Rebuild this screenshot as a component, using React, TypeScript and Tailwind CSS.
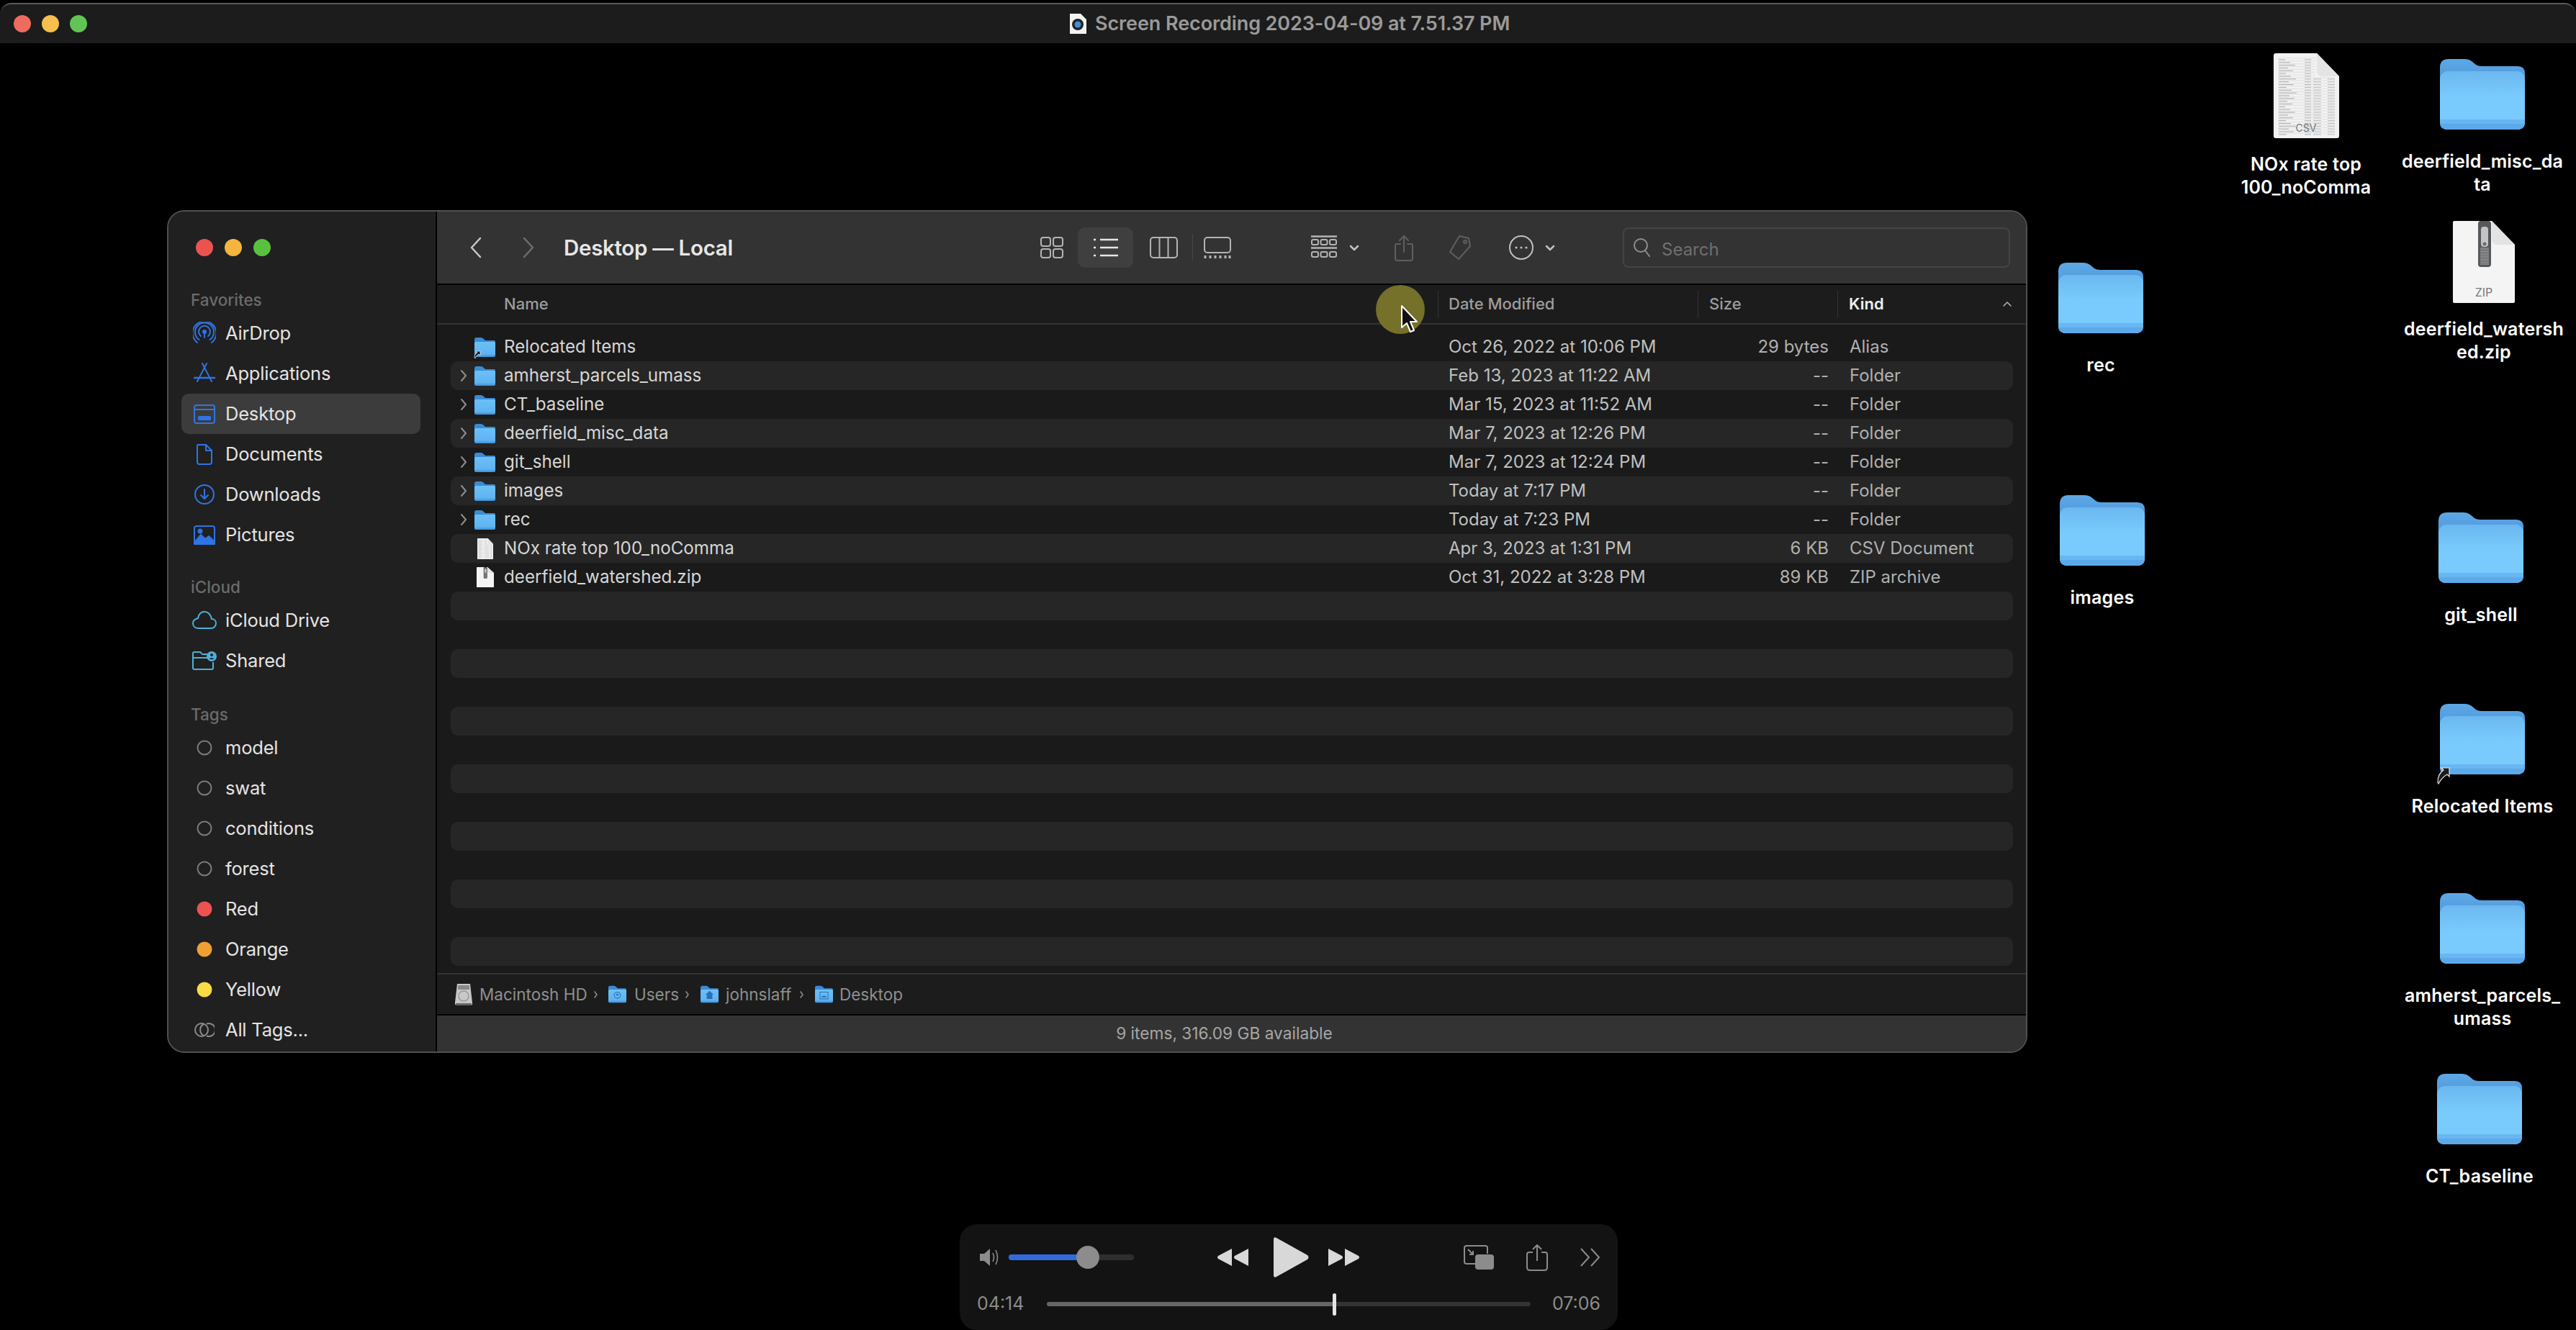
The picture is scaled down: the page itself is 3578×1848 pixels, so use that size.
import React from "react";

const FONT = "font-['Inter','Liberation_Sans',sans-serif]";

function BigFolder({ shortcut }: { shortcut?: boolean }) {
  return (
    <svg width="118" height="98" viewBox="0 0 118 98" className="overflow-visible block">
      <defs>
        <linearGradient id="bf" x1="0" y1="0" x2="0" y2="1">
          <stop offset="0" stopColor="#6bb8f0" />
          <stop offset="0.45" stopColor="#79cbfd" />
          <stop offset="1" stopColor="#79cbfd" />
        </linearGradient>
        <linearGradient id="bt" x1="0" y1="0" x2="0" y2="1">
          <stop offset="0" stopColor="#5ea8e6" />
          <stop offset="1" stopColor="#4a94d8" />
        </linearGradient>
      </defs>
      <path d="M0 12 Q0 0 12 0 H34 Q40 0 44 3 L50 8 Q53 10 58 10 H108 Q118 10 118 20 V40 H0 Z" fill="url(#bt)" />
      <rect x="0" y="17" width="118" height="81" rx="11" fill="url(#bf)" />
      <path d="M0 84 H118 V87 Q118 98 107 98 H11 Q0 98 0 87 Z" fill="#69b6f2" />
      <path d="M0 90 H118 Q117 98 107 98 H11 Q1 98 0 90 Z" fill="#5ca9ea" />
      {shortcut && (
        <g transform="translate(-3 89)">
          <path d="M0 20 C0 10 5 5 8 3 L5 0 H16 V12 L13 9 C8 12 4 16 1 22 Z" fill="#1c1c1c" stroke="#e8e8e8" strokeWidth="1.2" />
        </g>
      )}
    </svg>
  );
}

function SmallFolder({ shortcut, glyph, w = 29, h = 27 }: { shortcut?: boolean; glyph?: React.ReactNode; w?: number; h?: number }) {
  return (
    <svg width={w} height={h} viewBox="0 0 29 27" className="overflow-visible block shrink-0">
      <defs>
        <linearGradient id="sf" x1="0" y1="0" x2="0" y2="1">
          <stop offset="0" stopColor="#6cc0f8" />
          <stop offset="0.8" stopColor="#5fb4f1" />
          <stop offset="1" stopColor="#3f8ed6" />
        </linearGradient>
      </defs>
      <path d="M0 3 Q0 0 3 0 H9 Q11 0 13 2 L15 4 H27 Q29 4 29 6 V10 H0 Z" fill="#3a8bd6" />
      <rect x="0" y="6" width="29" height="21" rx="2" fill="url(#sf)" />
      {glyph}
      {shortcut && (
        <g transform="translate(0 19)">
          <path d="M0 9 C0 5 2 3 4 2 L2 0 H8 V6 L6 4 C4 5 2 7 1 10 Z" fill="#111" stroke="#f0f0f0" strokeWidth="0.8" />
        </g>
      )}
    </svg>
  );
}

function CsvIcon({ w, h, label = true }: { w: number; h: number; label?: boolean }) {
  const rows = Array.from({ length: 28 }, (_, i) => 7 + i * 3.85);
  return (
    <svg width={w} height={h} viewBox="0 0 91 118" preserveAspectRatio="none" className="block">
      <path d="M3 0 H60 L91 32 V115 Q91 118 88 118 H3 Q0 118 0 115 V3 Q0 0 3 0 Z" fill="#f2f2f2" />
      {rows.map((y, i) => (
        <g key={y}>
          <line x1="6" x2={y < 32 ? 58 : 85} y1={y} y2={y} stroke="#d4d4d4" strokeWidth="0.6" />
          <line x1="7" x2={16 + ((i * 7) % 17)} y1={y + 1.9} y2={y + 1.9} stroke="#a2a2a2" strokeWidth="0.9" />
          <line x1="43" x2="52" y1={y + 1.9} y2={y + 1.9} stroke="#aaaaaa" strokeWidth="0.9" />
          {y > 32 && <line x1="55" x2="66" y1={y + 1.9} y2={y + 1.9} stroke="#b2b2b2" strokeWidth="0.9" />}
          {y > 32 && <line x1="75" x2="85" y1={y + 1.9} y2={y + 1.9} stroke="#b2b2b2" strokeWidth="0.9" />}
        </g>
      ))}
      <path d="M60 0 L91 32 H68 Q60 32 60 24 Z" fill="#e4e4e4" />
      {label && (
        <text x="45" y="109" fontSize="14" fill="#777" textAnchor="middle" fontFamily="Inter, sans-serif">CSV</text>
      )}
    </svg>
  );
}

function ZipIcon({ w, h, label = true }: { w: number; h: number; label?: boolean }) {
  return (
    <svg width={w} height={h} viewBox="0 0 86 114" preserveAspectRatio="none" className="block">
      <path d="M2 0 H54 L86 33 V112 Q86 114 84 114 H2 Q0 114 0 112 V2 Q0 0 2 0 Z" fill="#f4f4f4" />
      <path d="M54 0 L86 33 H62 Q54 33 54 25 Z" fill="#e3e3e3" />
      <rect x="35" y="0" width="18" height="64" rx="4" fill="#55585c" />
      <rect x="39" y="8" width="10" height="28" rx="4" fill="#c4c4c4" />
      <circle cx="44" cy="32" r="2.5" fill="#6c6c6c" />
      {Array.from({ length: 11 }, (_, i) => (
        <line key={i} x1="38" x2="50" y1={38 + i * 2.2} y2={38 + i * 2.2} stroke="#b8b8b8" strokeWidth="0.9" />
      ))}
      {label && (
        <text x="43" y="105" fontSize="16" fill="#777" textAnchor="middle" fontFamily="Inter, sans-serif">ZIP</text>
      )}
    </svg>
  );
}

function DesktopLabel({ children }: { children: React.ReactNode }) {
  return (
    <div className="text-center text-[25px] leading-[32px] font-semibold text-white whitespace-nowrap tracking-[0.2px]">
      {children}
    </div>
  );
}

const Sb = ({ children, w = 32, h = 32 }: { children: React.ReactNode; w?: number; h?: number }) => (
  <svg width={w} height={h} viewBox="0 0 32 32" fill="none" stroke="#2f74e4" strokeWidth="2" strokeLinecap="round" strokeLinejoin="round" className="block">
    {children}
  </svg>
);

const sideFav: [string, React.ReactNode][] = [
  ["AirDrop", <Sb><circle cx="16" cy="14" r="2" fill="#2f74e4" /><path d="M11 20 A8 8 0 1 1 21 20" /><path d="M8.5 25 A13 13 0 1 1 23.5 25" /><path d="M6 29 A16.5 16.5 0 1 1 26 29" /><path d="M16 16 V22" /></Sb>],
  ["Applications", <Sb><path d="M13 2 L26 27" /><path d="M19 2 L6 27" /><path d="M2 22 H30" strokeWidth="2.5" /></Sb>],
  ["Desktop", <Sb><rect x="2" y="4" width="28" height="25" rx="3" /><path d="M2 10 H30" /><rect x="8" y="20" width="16" height="4" rx="0.5" fill="#2f74e4" /></Sb>],
  ["Documents", <Sb><path d="M7 3 H18 L26 11 V27 Q26 30 23 30 H9 Q6 30 6 27 V5 Q6 3 7 3 Z" /><path d="M18 3 V11 H26" /></Sb>],
  ["Downloads", <Sb><circle cx="16" cy="16" r="13" /><path d="M16 9 V22" /><path d="M11 17 L16 22 L21 17" /></Sb>],
  ["Pictures", <Sb><rect x="2" y="4" width="28" height="25" rx="3" /><path d="M2 27 L11 16 L17 22 L22 18 L30 26 V29 H2 Z" fill="#2f74e4" /><circle cx="10" cy="11" r="2.5" fill="#2f74e4" /></Sb>],
];

const Cloud = (
  <svg width="34" height="28" viewBox="0 0 34 28" fill="none" stroke="#4cb1d8" strokeWidth="2" className="block">
    <path d="M9 25 H26 C30 25 33 22 33 18 C33 14 30 12 27 12 C26 6 22 2 17 2 C12 2 9 6 8 11 C4 12 1 14 1 18 C1 22 4 25 9 25 Z" />
  </svg>
);
const Shared = (
  <svg width="34" height="28" viewBox="0 0 34 28" fill="none" stroke="#4cb1d8" strokeWidth="2" className="block">
    <path d="M22 5 H14 L11 2 H3 Q1 2 1 4 V24 Q1 26 3 26 H27 Q29 26 29 24 V16" />
    <path d="M1 10 H22" />
    <circle cx="27" cy="8" r="7" fill="#4cb1d8" stroke="none" />
    <circle cx="27" cy="6" r="2" fill="#202020" stroke="none" />
    <path d="M23.5 12 Q27 8 30.5 12" fill="#202020" stroke="none" />
  </svg>
);

const Ring = ({ color, fill }: { color: string; fill?: boolean }) => (
  <svg width="24" height="24" viewBox="0 0 24 24" className="block">
    <circle cx="12" cy="12" r={fill ? 10.5 : 9.5} fill={fill ? color : "none"} stroke={fill ? "none" : color} strokeWidth="2" />
  </svg>
);
const AllTags = (
  <svg width="28" height="24" viewBox="0 0 28 24" fill="none" stroke="#8a8a8a" strokeWidth="2" className="block">
    <circle cx="10" cy="12" r="9" />
    <path d="M17 3.5 A9 9 0 1 1 17 20.5" />
    <path d="M13 4 A9 9 0 0 0 13 20" />
  </svg>
);

function SideRow({ icon, label, selected }: { icon: React.ReactNode; label: string; selected?: boolean }) {
  return (
    <div className={`mx-[18px] w-[332px] h-[56px] rounded-[10px] flex items-center pl-[14px] ${selected ? "bg-[#3c3c3c]" : ""}`}>
      <div className="w-[36px] flex justify-center">{icon}</div>
      <span className="ml-[11px] text-[25.5px] text-[#e4e4e4] tracking-[-0.2px]">{label}</span>
    </div>
  );
}

function SideHead({ children, className }: { children: string; className: string }) {
  return (
    <div className={`h-[36px] pl-[31px] flex items-center text-[22.5px] font-medium text-[#6b6b6b] ${className}`}>{children}</div>
  );
}

const Chev = ({ dir, color, w, h, sw = 2.5 }: { dir: "l" | "r" | "d" | "u"; color: string; w: number; h: number; sw?: number }) => {
  const d = { l: `M${w - 2} 2 L2 ${h / 2} L${w - 2} ${h - 2}`, r: `M2 2 L${w - 2} ${h / 2} L2 ${h - 2}`, d: `M2 2 L${w / 2} ${h - 2} L${w - 2} 2`, u: `M2 ${h - 2} L${w / 2} 2 L${w - 2} ${h - 2}` }[dir];
  return (
    <svg width={w} height={h} viewBox={`0 0 ${w} ${h}`} fill="none" stroke={color} strokeWidth={sw} strokeLinecap="round" strokeLinejoin="round" className="block shrink-0">
      <path d={d} />
    </svg>
  );
};

const TB = "#b4b4b4";

function Toolbar() {
  return (
    <div className="h-[102px] shrink-0 bg-[#333333] border-b-2 border-black flex items-center">
      <div className="ml-[46px]"><Chev dir="l" color="#c9c9c9" w={16} h={30} /></div>
      <div className="ml-[57px]"><Chev dir="r" color="#6e6e6e" w={16} h={30} /></div>
      <div className="ml-[41px] w-[662px] text-[29.5px] font-semibold text-[#e6e6e6] tracking-[-0.3px] whitespace-nowrap">Desktop — Local</div>
      <svg width="32" height="30" viewBox="0 0 32 30" fill="none" stroke={TB} strokeWidth="2" className="block">
        <rect x="1" y="1" width="13" height="12" rx="3" /><rect x="18" y="1" width="13" height="12" rx="3" />
        <rect x="1" y="17" width="13" height="12" rx="3" /><rect x="18" y="17" width="13" height="12" rx="3" />
      </svg>
      <div className="ml-[20px] w-[77px] h-[56px] rounded-[10px] bg-[#3f3f3f] flex items-center justify-center">
        <svg width="34" height="28" viewBox="0 0 34 28" fill="none" stroke="#e6e6e6" strokeWidth="2.5" className="block">
          <path d="M9 3 H34 M9 14 H34 M9 25 H34" />
          <path d="M0 3 H3 M0 14 H3 M0 25 H3" />
        </svg>
      </div>
      <svg width="39" height="30" viewBox="0 0 39 30" fill="none" stroke={TB} strokeWidth="2" className="block ml-[23px]">
        <rect x="1" y="1" width="37" height="28" rx="4" /><path d="M13.5 1 V29 M25.5 1 V29" />
      </svg>
      <div className="ml-[20px] w-px h-[36px] bg-[#474747]" />
      <svg width="38" height="30" viewBox="0 0 38 30" fill="none" stroke={TB} strokeWidth="2" className="block ml-[15px]">
        <rect x="1" y="1" width="36" height="21" rx="4" />
        <path d="M2 26 V30 M9 26 V30 M16 26 V30 M23 26 V30 M30 26 V30 M36 26 V30" strokeWidth="3" />
      </svg>
      <svg width="36" height="35" viewBox="0 0 36 35" fill="none" stroke={TB} strokeWidth="2" className="block ml-[111px]">
        <path d="M0 1.5 H36 M0 17.5 H36" strokeWidth="2.5" />
        <rect x="1" y="6" width="9" height="7" rx="2" /><rect x="13.5" y="6" width="9" height="7" rx="2" /><rect x="26" y="6" width="9" height="7" rx="2" />
        <rect x="1" y="23" width="9" height="7" rx="2" /><rect x="13.5" y="23" width="9" height="7" rx="2" /><rect x="26" y="23" width="9" height="7" rx="2" />
      </svg>
      <div className="ml-[17px]"><Chev dir="d" color="#c0c0c0" w={14} h={9} /></div>
      <svg width="26" height="37" viewBox="0 0 26 37" fill="none" stroke="#5f5f5f" strokeWidth="2" strokeLinecap="round" strokeLinejoin="round" className="block ml-[49px]">
        <path d="M8 13 H3 Q1 13 1 15 V33 Q1 36 4 36 H22 Q25 36 25 33 V15 Q25 13 23 13 H18" />
        <path d="M13 24 V2 M7 8 L13 2 L19 8" />
      </svg>
      <svg width="30" height="36" viewBox="0 0 30 36" fill="none" stroke="#5f5f5f" strokeWidth="2" strokeLinejoin="round" className="block ml-[50px]">
        <path d="M14 2 L27 5 L29 16 L13 34 L1 24 Z" />
        <circle cx="22" cy="10" r="2" />
      </svg>
      <svg width="34" height="34" viewBox="0 0 34 34" fill="none" stroke="#c0c0c0" strokeWidth="2" className="block ml-[53px]">
        <circle cx="17" cy="17" r="16" />
        <circle cx="10" cy="17" r="1.6" fill="#c0c0c0" stroke="none" /><circle cx="17" cy="17" r="1.6" fill="#c0c0c0" stroke="none" /><circle cx="24" cy="17" r="1.6" fill="#c0c0c0" stroke="none" />
      </svg>
      <div className="ml-[16px]"><Chev dir="d" color="#c0c0c0" w={14} h={9} /></div>
      <div className="ml-[94px] w-[538px] h-[56px] rounded-[8px] border-2 border-[#444444] flex items-center pl-[12px]">
        <svg width="24" height="28" viewBox="0 0 24 28" fill="none" stroke="#8f8f8f" strokeWidth="2" className="block">
          <circle cx="11" cy="11" r="9" /><path d="M17 18 L23 26" strokeLinecap="round" />
        </svg>
        <span className="ml-[16px] mt-[5px] text-[24px] text-[#6f6f6f]">Search</span>
      </div>
    </div>
  );
}

function Header() {
  const sep = "w-px h-[38px] bg-[#343434] shrink-0";
  return (
    <div className="h-[55px] shrink-0 bg-[#1c1c1c] border-b-2 border-[#323232] flex items-center text-[22px] text-[#9d9d9d] font-medium">
      <div className="pl-[93px] w-[1390px] shrink-0">Name</div>
      <div className={sep} />
      <div className="ml-[14px] w-[346px] shrink-0">Date Modified</div>
      <div className={sep} />
      <div className="ml-[15px] w-[178px] shrink-0">Size</div>
      <div className={sep} />
      <div className="ml-[15px] w-[213px] shrink-0 text-[#f0f0f0] font-semibold">Kind</div>
      <Chev dir="u" color="#b0b0b0" w={14} h={9} sw={1.6} />
    </div>
  );
}

type Row = { name: string; date: string; size: string; kind: string; folder?: boolean; type?: "alias" | "csv" | "zip" };
const rows: Row[] = [
  { name: "Relocated Items", date: "Oct 26, 2022 at 10:06 PM", size: "29 bytes", kind: "Alias", type: "alias" },
  { name: "amherst_parcels_umass", date: "Feb 13, 2023 at 11:22 AM", size: "--", kind: "Folder", folder: true },
  { name: "CT_baseline", date: "Mar 15, 2023 at 11:52 AM", size: "--", kind: "Folder", folder: true },
  { name: "deerfield_misc_data", date: "Mar 7, 2023 at 12:26 PM", size: "--", kind: "Folder", folder: true },
  { name: "git_shell", date: "Mar 7, 2023 at 12:24 PM", size: "--", kind: "Folder", folder: true },
  { name: "images", date: "Today at 7:17 PM", size: "--", kind: "Folder", folder: true },
  { name: "rec", date: "Today at 7:23 PM", size: "--", kind: "Folder", folder: true },
  { name: "NOx rate top 100_noComma", date: "Apr 3, 2023 at 1:31 PM", size: "6 KB", kind: "CSV Document", type: "csv" },
  { name: "deerfield_watershed.zip", date: "Oct 31, 2022 at 3:28 PM", size: "89 KB", kind: "ZIP archive", type: "zip" },
];

function FileRow({ row, striped }: { row: Row; striped: boolean }) {
  return (
    <div className={`h-[40px] w-[2170px] ml-[19px] rounded-[10px] flex items-center text-[24.2px] text-[#d6d6d6] whitespace-nowrap ${striped ? "bg-[#262626]" : ""}`}>
      <div className="w-[33px] pl-[13px] shrink-0">
        {row.folder && <Chev dir="r" color="#8e8e8e" w={10} h={18} sw={2} />}
      </div>
      <div className="w-[41px] shrink-0 flex">
        {(row.folder || row.type === "alias") && <SmallFolder shortcut={row.type === "alias"} />}
        {row.type === "csv" && <div className="ml-[4px]"><CsvIcon w={22} h={29} label={false} /></div>}
        {row.type === "zip" && <div className="ml-[3px]"><ZipIcon w={24} h={28} label={false} /></div>}
      </div>
      <div className="w-[1312px] shrink-0">{row.name}</div>
      <div className="w-[359px] shrink-0 text-[#c0c0c0] text-[24px]">{row.date}</div>
      <div className="w-[169px] shrink-0 text-right text-[#b0b0b0] text-[24px]">{row.size}</div>
      <div className="ml-[29px] text-[#b0b0b0] text-[24px]">{row.kind}</div>
    </div>
  );
}

function PathBar() {
  const sep = <Chev dir="r" color="#8a8a8a" w={7} h={12} sw={1.6} />;
  const glyph = (g: React.ReactNode) => <SmallFolder w={25} h={25} glyph={g} />;
  return (
    <div className="h-[57px] shrink-0 bg-[#1c1c1c] border-t-2 border-[#333333] flex items-center pl-[25px] text-[22.5px] text-[#8f8f8f] whitespace-nowrap">
      <svg width="24" height="32" viewBox="0 0 24 32" className="block">
        <path d="M3 1 H21 L24 27 V30 H0 V27 Z" fill="#c8c8c8" />
        <rect x="4" y="3" width="16" height="6" fill="#8a8a8a" />
        <circle cx="12" cy="18" r="7" fill="none" stroke="#9a9a9a" strokeWidth="1.5" />
        <rect x="1" y="28" width="22" height="3" fill="#666" />
      </svg>
      <span className="ml-[10px] w-[146px]">Macintosh HD</span>
      <div className="ml-[12px]">{sep}</div>
      <div className="ml-[14px]">
        {glyph(<g><circle cx="14.5" cy="15" r="5" fill="none" stroke="#2a70b5" strokeWidth="1.3" /><circle cx="14.5" cy="14" r="1.8" fill="#2a70b5" /></g>)}
      </div>
      <span className="ml-[11px] w-[58px]">Users</span>
      <div className="ml-[12px]">{sep}</div>
      <div className="ml-[15px]">
        {glyph(<path d="M14.5 8 L21 14 H19 V21 H10 V14 H8 Z" fill="#2a70b5" />)}
      </div>
      <span className="ml-[10px] w-[90px]">johnslaff</span>
      <div className="ml-[12px]">{sep}</div>
      <div className="ml-[15px]">
        {glyph(<g><rect x="8" y="10" width="13" height="11" fill="none" stroke="#2a70b5" strokeWidth="1.2" /><rect x="11" y="16" width="7" height="2.5" fill="#2a70b5" /></g>)}
      </div>
      <span className="ml-[9px]">Desktop</span>
    </div>
  );
}

function FinderWindow() {
  return (
    <div className="absolute left-[232px] top-[292px] w-[2584px] h-[1171px] rounded-[24px] border-2 border-[#505050] overflow-hidden flex bg-[#1a1a1a]">
      <aside className="w-[373px] shrink-0 bg-[#202020] border-r-2 border-black">
        <div className="h-[100px] flex items-center pl-[38px] gap-[16px]">
          <div className="w-[24px] h-[24px] rounded-full bg-[#ec5350]" />
          <div className="w-[24px] h-[24px] rounded-full bg-[#f5b43f]" />
          <div className="w-[24px] h-[24px] rounded-full bg-[#58c23f]" />
        </div>
        <SideHead className="mt-[5px]">Favorites</SideHead>
        {sideFav.map(([l, i]) => (
          <SideRow key={l} label={l} icon={i} selected={l === "Desktop"} />
        ))}
        <SideHead className="mt-[27px]">iCloud</SideHead>
        <SideRow label="iCloud Drive" icon={Cloud} />
        <SideRow label="Shared" icon={Shared} />
        <SideHead className="mt-[29px]">Tags</SideHead>
        <SideRow label="model" icon={<Ring color="#7c7c7c" />} />
        <SideRow label="swat" icon={<Ring color="#7c7c7c" />} />
        <SideRow label="conditions" icon={<Ring color="#7c7c7c" />} />
        <SideRow label="forest" icon={<Ring color="#7c7c7c" />} />
        <SideRow label="Red" icon={<Ring color="#ec5350" fill />} />
        <SideRow label="Orange" icon={<Ring color="#f0a033" fill />} />
        <SideRow label="Yellow" icon={<Ring color="#f7dc45" fill />} />
        <SideRow label="All Tags..." icon={AllTags} />
      </aside>
      <main className="flex-1 flex flex-col min-w-0">
        <Toolbar />
        <Header />
        <div className="flex-1 min-h-0 overflow-hidden pt-[11px] bg-[#1a1a1a]">
          {rows.map((r, i) => (
            <FileRow key={r.name} row={r} striped={i % 2 === 1} />
          ))}
          {Array.from({ length: 13 }, (_, i) => (
            <div key={i} className={`h-[40px] w-[2170px] ml-[19px] rounded-[10px] ${i % 2 === 0 ? "bg-[#262626]" : ""}`} />
          ))}
        </div>
        <PathBar />
        <div className="h-[52px] shrink-0 bg-[#333333] border-t-2 border-black flex items-center justify-center pr-[20px] text-[22.7px] text-[#a6a6a6]">
          9 items, 316.09 GB available
        </div>
      </main>
    </div>
  );
}

function Player() {
  const icon = "#8c8c8c";
  return (
    <div className="absolute left-[1333px] top-[1701px] w-[914px] h-[147px] rounded-[24px] bg-[#131313] pt-[6px]">
      <div className="h-[80px] flex items-center">
        <svg width="29" height="26" viewBox="0 0 29 26" fill="none" className="block ml-[28px] shrink-0">
          <path d="M0 8 H6 L14 1 V25 L6 18 H0 Z" fill={icon} />
          <path d="M18 7 Q21 13 18 19 M22 3 Q27 13 22 23" stroke={icon} strokeWidth="1.6" />
        </svg>
        <div className="relative ml-[11px] w-[174px] h-[8px] rounded-full bg-[#2e2e2e] shrink-0">
          <div className="h-full w-[110px] rounded-full bg-[#2f6bdc]" />
          <div className="absolute left-[94px] top-[-12px] w-[32px] h-[32px] rounded-full bg-[#8c8c8c]" />
        </div>
        <svg width="45" height="26" viewBox="0 0 45 26" fill="#d8d8d8" className="block ml-[115px] shrink-0">
          <path d="M21 1 V25 L2 15 Q0 13 2 11 Z" /><path d="M44 1 V25 L25 15 Q23 13 25 11 Z" />
        </svg>
        <svg width="49" height="56" viewBox="0 0 49 56" fill="#d8d8d8" className="block ml-[34px] shrink-0">
          <path d="M0 3 Q0 -1 4 1 L47 25 Q50 28 47 31 L4 55 Q0 57 0 53 Z" />
        </svg>
        <svg width="44" height="26" viewBox="0 0 44 26" fill="#d8d8d8" className="block ml-[27px] shrink-0">
          <path d="M0 1 V25 L19 15 Q21 13 19 11 Z" /><path d="M23 1 V25 L42 15 Q44 13 42 11 Z" />
        </svg>
        <svg width="42" height="34" viewBox="0 0 42 34" fill="none" className="block ml-[144px] shrink-0">
          <path d="M28 26 H4 Q1 26 1 23 V4 Q1 1 4 1 H30 Q33 1 33 4 V12" stroke={icon} strokeWidth="2" />
          <rect x="16" y="13" width="26" height="21" rx="4" fill={icon} />
          <path d="M6 6 L13 13 M13 8 V13 H8" stroke={icon} strokeWidth="2" />
        </svg>
        <svg width="30" height="38" viewBox="0 0 30 38" fill="none" stroke={icon} strokeWidth="2" strokeLinejoin="round" className="block ml-[45px] shrink-0">
          <path d="M9 12 H4 Q1 12 1 15 V33 Q1 37 5 37 H25 Q29 37 29 33 V15 Q29 12 26 12 H21" />
          <path d="M15 24 V2 M9 8 L15 2 L21 8" />
        </svg>
        <svg width="28" height="26" viewBox="0 0 28 26" fill="none" stroke={icon} strokeWidth="2" className="block ml-[45px] shrink-0">
          <path d="M1 1 L12 13 L1 25 M15 1 L26 13 L15 25" />
        </svg>
      </div>
      <div className="h-[50px] flex items-center text-[25px] text-[#8c8c8c]">
        <span className="ml-[24px] w-[67px] shrink-0">04:14</span>
        <div className="relative ml-[30px] w-[672px] h-[6px] rounded-full bg-[#333333] shrink-0">
          <div className="h-full w-[399px] rounded-l-full bg-[#666666]" />
          <div className="absolute left-[397px] top-[-12px] w-[5px] h-[31px] rounded-full bg-[#e4e4e4]" />
        </div>
        <span className="ml-[30px]">07:06</span>
      </div>
    </div>
  );
}

export default function App() {
  return (
    <div className={`relative w-[3578px] h-[1848px] bg-black overflow-hidden ${FONT}`}>
      <header className="h-[60px] pt-[4px]">
        <div className="h-[56px] rounded-t-[16px] bg-[#1c1c1c] border-t-2 border-[#5b5b5b] flex items-center pl-[19px] gap-[15px]">
          <div className="w-[24px] h-[24px] rounded-full bg-[#ee6b60]" />
          <div className="w-[24px] h-[24px] rounded-full bg-[#f6bd4f]" />
          <div className="w-[24px] h-[24px] rounded-full bg-[#61c454]" />
          <div className="ml-[1349px] flex items-center">
            <svg width="24" height="28" viewBox="0 0 24 28" className="block">
              <path d="M1 0 H16 L24 8 V28 H1 Z" fill="#f2f2f2" />
              <circle cx="12" cy="15" r="8" fill="#222" />
              <circle cx="12" cy="15" r="4.5" fill="#3f8ed6" />
            </svg>
            <span className="ml-[12px] text-[27px] font-semibold text-[#9a9a9a] tracking-[-0.1px] whitespace-nowrap">Screen Recording 2023-04-09 at 7.51.37 PM</span>
          </div>
        </div>
      </header>

      <FinderWindow />

      <div className="absolute left-[1911px] top-[396px] w-[68px] h-[68px] rounded-full bg-[#75702a]" />
      <svg width="24" height="40" viewBox="0 0 24 40" className="absolute left-[1945px] top-[424px]">
        <path d="M2 1 V31 L9 25 L14 37 L19 35 L14 23 L23 23 Z" fill="#111" stroke="#fff" strokeWidth="2" strokeLinejoin="round" />
      </svg>

      <div className="absolute left-[3083px] top-[74px] w-[240px] flex flex-col items-center">
        <CsvIcon w={91} h={118} />
        <div className="mt-[20px]"><DesktopLabel>NOx rate top<br />100_noComma</DesktopLabel></div>
      </div>
      <div className="absolute left-[3328px] top-[82px] w-[240px] flex flex-col items-center">
        <BigFolder />
        <div className="mt-[28px]"><DesktopLabel>deerfield_misc_da<br />ta</DesktopLabel></div>
      </div>
      <div className="absolute left-[3330px] top-[307px] w-[240px] flex flex-col items-center">
        <ZipIcon w={86} h={114} />
        <div className="mt-[20px]"><DesktopLabel>deerfield_watersh<br />ed.zip</DesktopLabel></div>
      </div>
      <div className="absolute left-[2798px] top-[365px] w-[240px] flex flex-col items-center">
        <BigFolder />
        <div className="mt-[28px]"><DesktopLabel>rec</DesktopLabel></div>
      </div>
      <div className="absolute left-[2800px] top-[688px] w-[240px] flex flex-col items-center">
        <BigFolder />
        <div className="mt-[28px]"><DesktopLabel>images</DesktopLabel></div>
      </div>
      <div className="absolute left-[3326px] top-[712px] w-[240px] flex flex-col items-center">
        <BigFolder />
        <div className="mt-[28px]"><DesktopLabel>git_shell</DesktopLabel></div>
      </div>
      <div className="absolute left-[3328px] top-[978px] w-[240px] flex flex-col items-center">
        <BigFolder shortcut />
        <div className="mt-[28px]"><DesktopLabel>Relocated Items</DesktopLabel></div>
      </div>
      <div className="absolute left-[3328px] top-[1241px] w-[240px] flex flex-col items-center">
        <BigFolder />
        <div className="mt-[28px]"><DesktopLabel>amherst_parcels_<br />umass</DesktopLabel></div>
      </div>
      <div className="absolute left-[3324px] top-[1492px] w-[240px] flex flex-col items-center">
        <BigFolder />
        <div className="mt-[28px]"><DesktopLabel>CT_baseline</DesktopLabel></div>
      </div>

      <Player />
    </div>
  );
}
